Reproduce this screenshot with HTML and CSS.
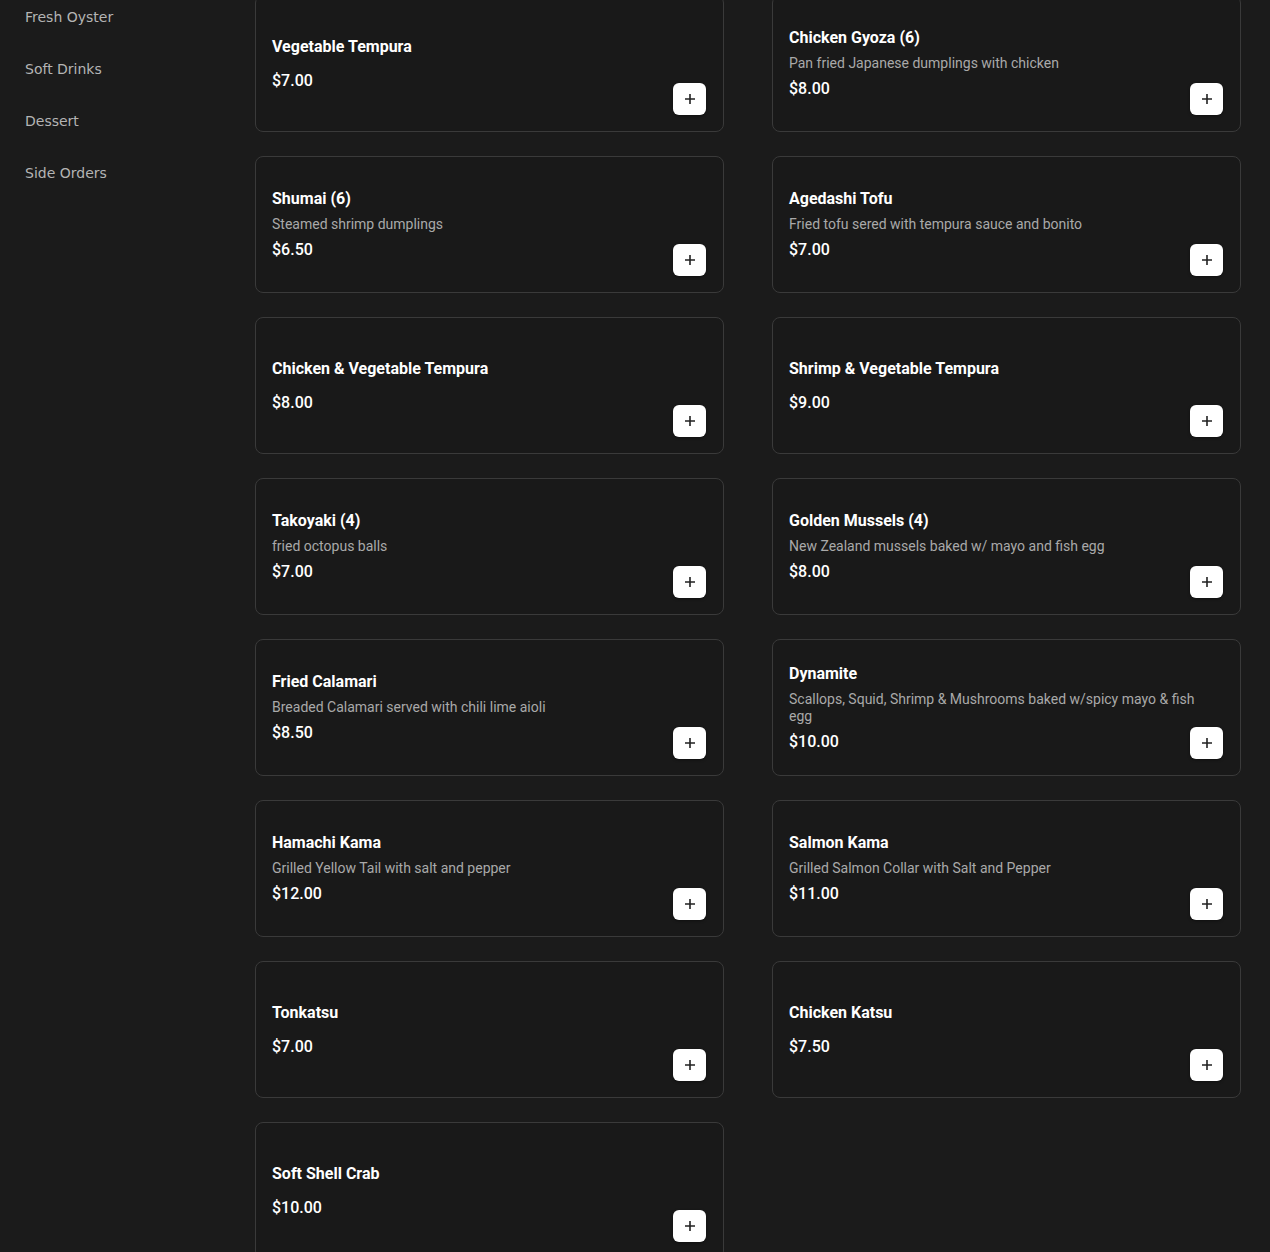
FILE: index.html
```html
<!DOCTYPE html>
<html lang="en">
<head>
<meta charset="utf-8">
<title>Menu</title>
<link rel="stylesheet" href="styles.css">
</head>
<body>
<div class="page">
  <nav class="sidebar">
    <a class="nav-item">Fresh Oyster</a>
    <a class="nav-item">Soft Drinks</a>
    <a class="nav-item">Dessert</a>
    <a class="nav-item">Side Orders</a>
  </nav>
  <main class="menu">
    <div class="grid">
      <div class="card"><div class="info"><div class="title">Vegetable Tempura</div><div class="desc"></div><div class="price">$7.00</div></div><button class="add"><svg viewBox="0 0 12 12" width="12" height="12"><path d="M6 1v10M1 6h10"/></svg></button></div>
      <div class="card"><div class="info"><div class="title">Chicken Gyoza (6)</div><div class="desc">Pan fried Japanese dumplings with chicken</div><div class="price">$8.00</div></div><button class="add"><svg viewBox="0 0 12 12" width="12" height="12"><path d="M6 1v10M1 6h10"/></svg></button></div>
      <div class="card"><div class="info"><div class="title">Shumai (6)</div><div class="desc">Steamed shrimp dumplings</div><div class="price">$6.50</div></div><button class="add"><svg viewBox="0 0 12 12" width="12" height="12"><path d="M6 1v10M1 6h10"/></svg></button></div>
      <div class="card"><div class="info"><div class="title">Agedashi Tofu</div><div class="desc">Fried tofu sered with tempura sauce and bonito</div><div class="price">$7.00</div></div><button class="add"><svg viewBox="0 0 12 12" width="12" height="12"><path d="M6 1v10M1 6h10"/></svg></button></div>
      <div class="card"><div class="info"><div class="title">Chicken &amp; Vegetable Tempura</div><div class="desc"></div><div class="price">$8.00</div></div><button class="add"><svg viewBox="0 0 12 12" width="12" height="12"><path d="M6 1v10M1 6h10"/></svg></button></div>
      <div class="card"><div class="info"><div class="title">Shrimp &amp; Vegetable Tempura</div><div class="desc"></div><div class="price">$9.00</div></div><button class="add"><svg viewBox="0 0 12 12" width="12" height="12"><path d="M6 1v10M1 6h10"/></svg></button></div>
      <div class="card"><div class="info"><div class="title">Takoyaki (4)</div><div class="desc">fried octopus balls</div><div class="price">$7.00</div></div><button class="add"><svg viewBox="0 0 12 12" width="12" height="12"><path d="M6 1v10M1 6h10"/></svg></button></div>
      <div class="card"><div class="info"><div class="title">Golden Mussels (4)</div><div class="desc">New Zealand mussels baked w/ mayo and fish egg</div><div class="price">$8.00</div></div><button class="add"><svg viewBox="0 0 12 12" width="12" height="12"><path d="M6 1v10M1 6h10"/></svg></button></div>
      <div class="card"><div class="info"><div class="title">Fried Calamari</div><div class="desc">Breaded Calamari served with chili lime aioli</div><div class="price">$8.50</div></div><button class="add"><svg viewBox="0 0 12 12" width="12" height="12"><path d="M6 1v10M1 6h10"/></svg></button></div>
      <div class="card"><div class="info"><div class="title">Dynamite</div><div class="desc">Scallops, Squid, Shrimp &amp; Mushrooms baked w/spicy mayo &amp; fish egg</div><div class="price">$10.00</div></div><button class="add"><svg viewBox="0 0 12 12" width="12" height="12"><path d="M6 1v10M1 6h10"/></svg></button></div>
      <div class="card"><div class="info"><div class="title">Hamachi Kama</div><div class="desc">Grilled Yellow Tail with salt and pepper</div><div class="price">$12.00</div></div><button class="add"><svg viewBox="0 0 12 12" width="12" height="12"><path d="M6 1v10M1 6h10"/></svg></button></div>
      <div class="card"><div class="info"><div class="title">Salmon Kama</div><div class="desc">Grilled Salmon Collar with Salt and Pepper</div><div class="price">$11.00</div></div><button class="add"><svg viewBox="0 0 12 12" width="12" height="12"><path d="M6 1v10M1 6h10"/></svg></button></div>
      <div class="card"><div class="info"><div class="title">Tonkatsu</div><div class="desc"></div><div class="price">$7.00</div></div><button class="add"><svg viewBox="0 0 12 12" width="12" height="12"><path d="M6 1v10M1 6h10"/></svg></button></div>
      <div class="card"><div class="info"><div class="title">Chicken Katsu</div><div class="desc"></div><div class="price">$7.50</div></div><button class="add"><svg viewBox="0 0 12 12" width="12" height="12"><path d="M6 1v10M1 6h10"/></svg></button></div>
      <div class="card"><div class="info"><div class="title">Soft Shell Crab</div><div class="desc"></div><div class="price">$10.00</div></div><button class="add"><svg viewBox="0 0 12 12" width="12" height="12"><path d="M6 1v10M1 6h10"/></svg></button></div>
    </div>
  </main>
</div>
</body>
</html>
```
FILE: styles.css
```css
html, body {
  margin: 0;
  padding: 0;
  background: #1b1b1b;
}
body {
  font-family: Roboto, "Liberation Sans", sans-serif;
  color: #fff;
  height: 1252px;
  overflow: hidden;
}
.page {
  display: flex;
  align-items: flex-start;
}
.sidebar {
  width: 255px;
  flex: none;
  display: flex;
  flex-direction: column;
  margin-top: -9px;
}
.nav-item {
  display: block;
  padding: 16px 25px;
  line-height: 20px;
  font-family: "DejaVu Sans", sans-serif;
  font-size: 14px;
  color: #b4b4b4;
}
.menu {
  flex: 1;
  padding-right: 29px;
  margin-top: -5px;
}
.grid {
  display: grid;
  grid-template-columns: 469px 469px;
  column-gap: 48px;
  row-gap: 24px;
}
.card {
  position: relative;
  box-sizing: border-box;
  height: 137px;
  border: 1px solid #3a3a3a;
  border-radius: 8px;
  background: #191919;
  display: flex;
  align-items: center;
  padding: 0 33px 0 16px;
}
.info {
  display: flex;
  flex-direction: column;
  gap: 5px;
  width: 100%;
}
.title {
  font-size: 16px;
  line-height: 24px;
  font-weight: 700;
  color: #fff;
}
.desc {
  font-size: 14px;
  line-height: 17px;
  color: #a9a9a9;
}
.price {
  font-size: 16px;
  line-height: 24px;
  font-weight: 500;
  color: #fff;
}
.add {
  position: absolute;
  right: 17px;
  bottom: 16px;
  width: 33px;
  height: 32px;
  border: none;
  border-radius: 6px;
  background: #fff;
  box-shadow: 0 1px 3px rgba(0,0,0,0.4);
  display: flex;
  align-items: center;
  justify-content: center;
  padding: 0;
}
.add svg path {
  stroke: #222;
  stroke-width: 1.6;
  fill: none;
}
```
